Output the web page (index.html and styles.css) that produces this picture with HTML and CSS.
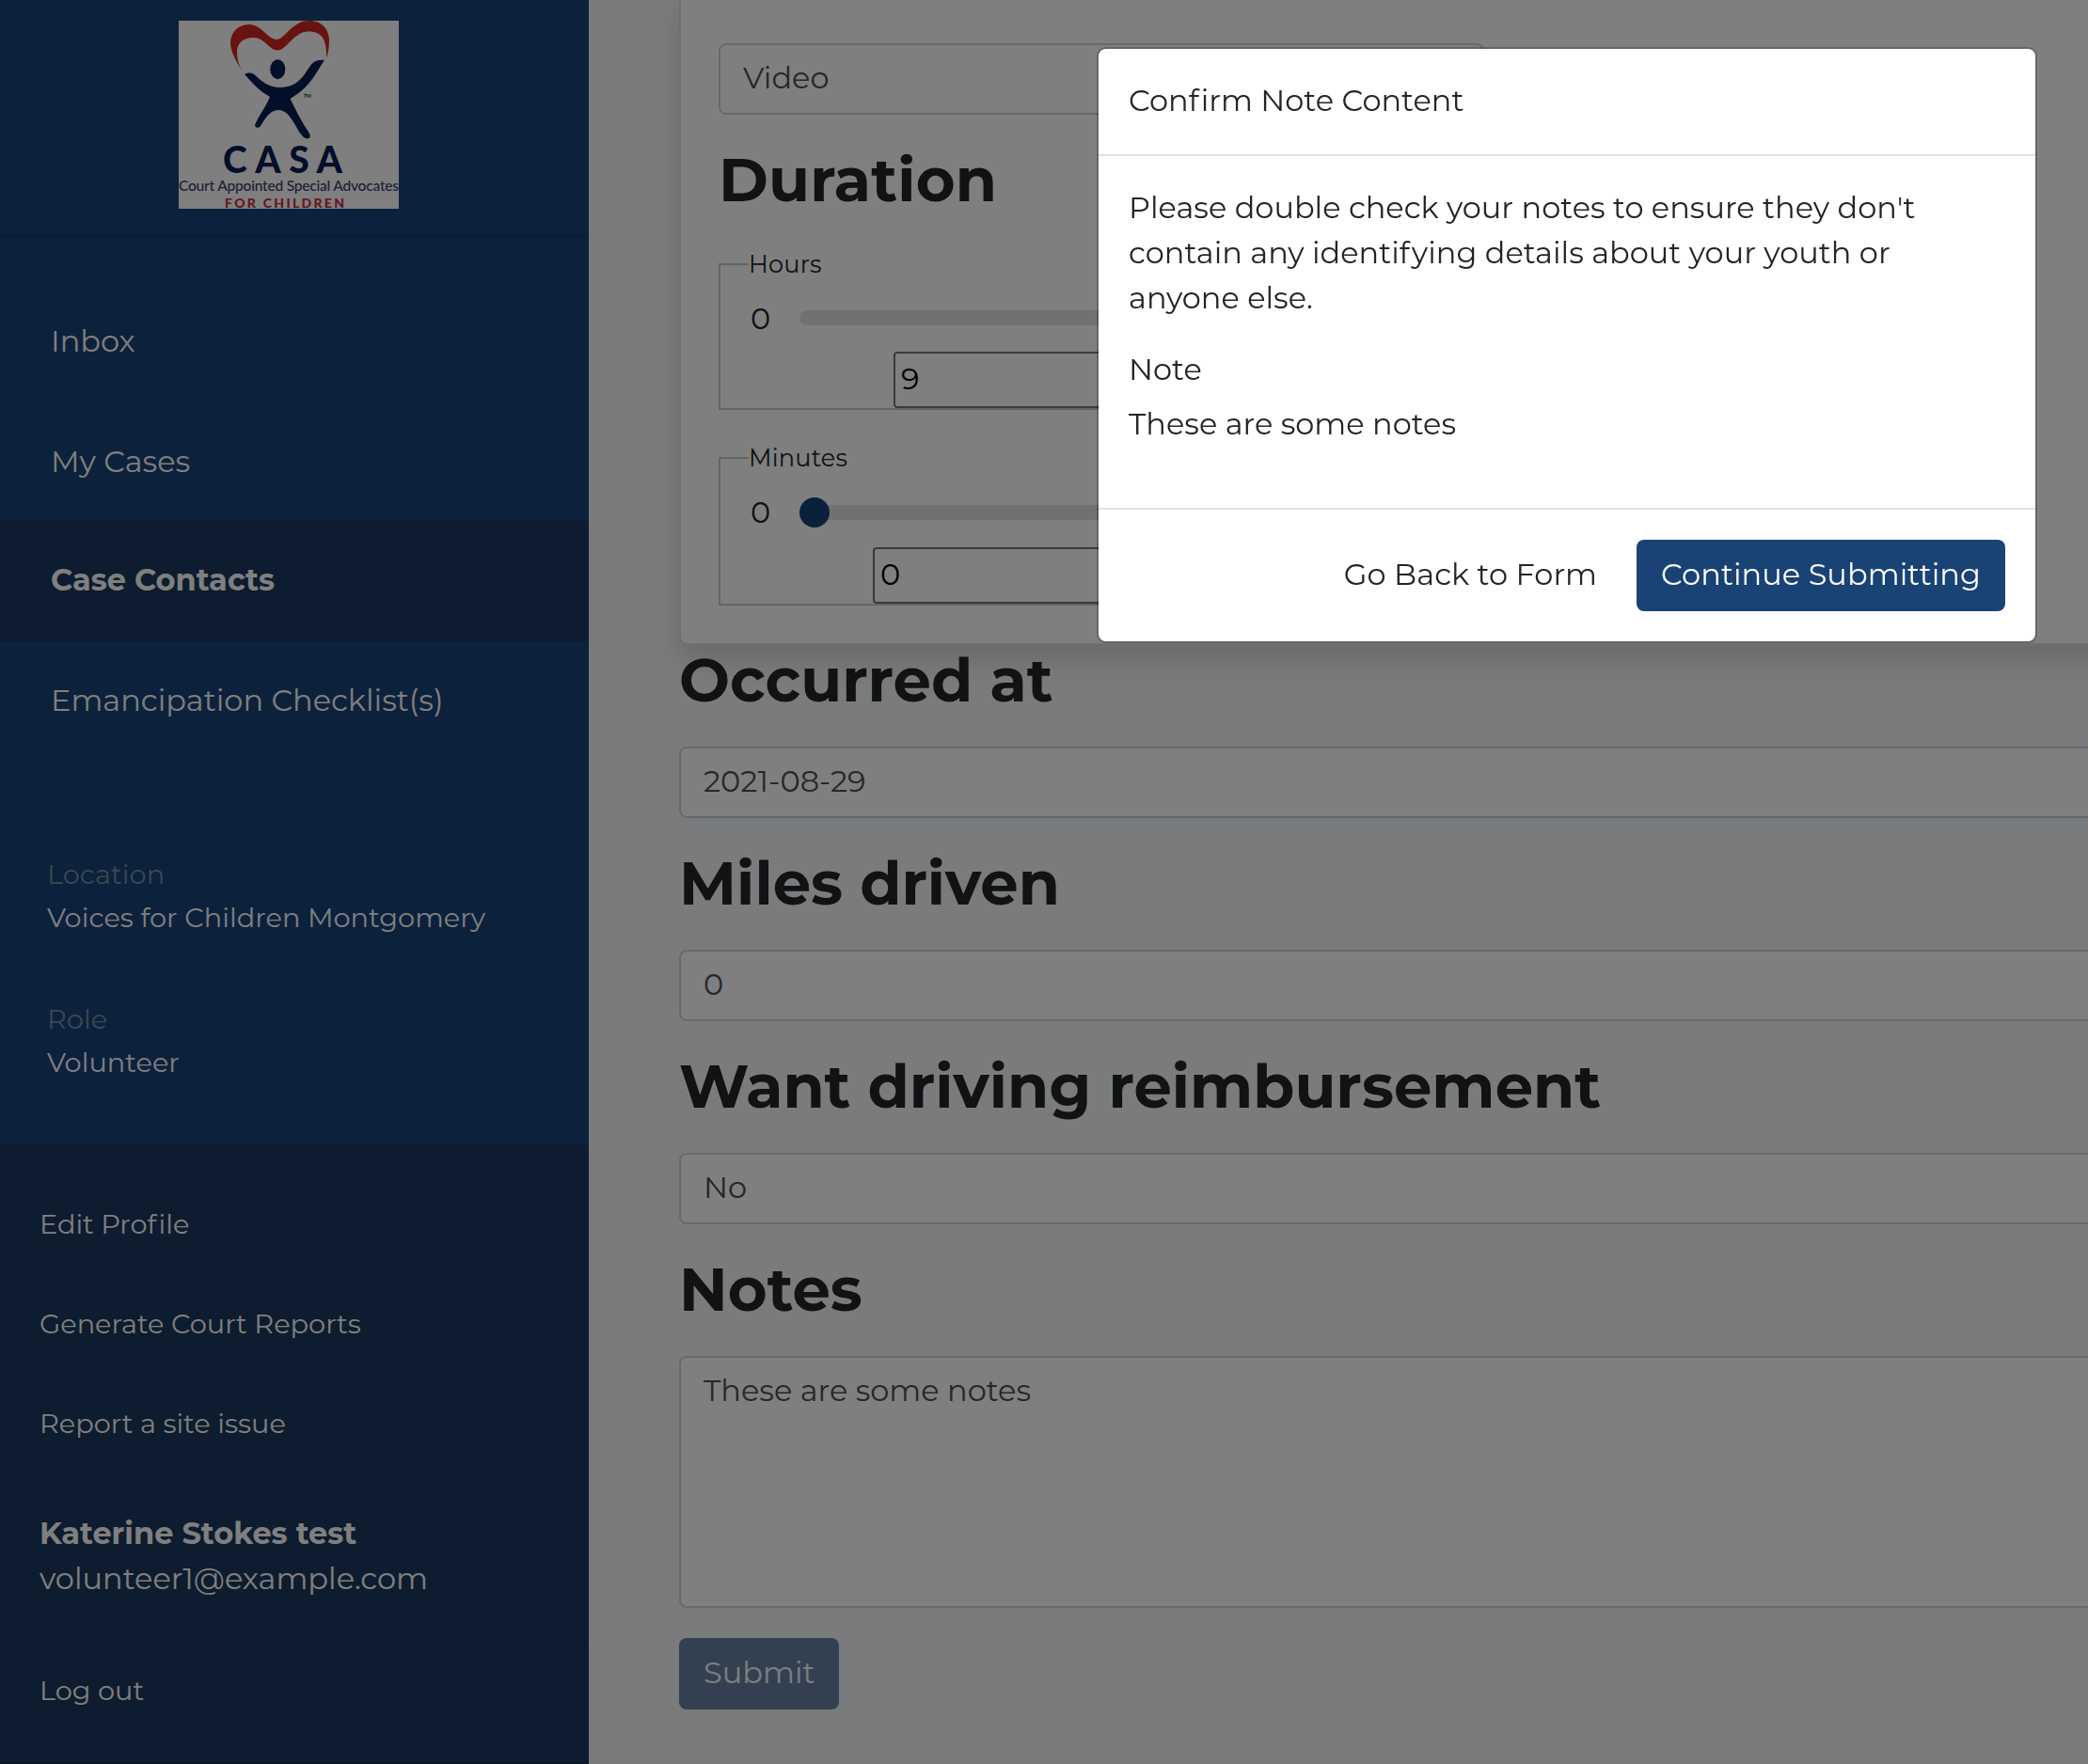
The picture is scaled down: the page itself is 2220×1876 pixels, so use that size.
FILE: index.html
```html
<!DOCTYPE html>
<html lang="en">
<head>
<meta charset="utf-8">
<title>CASA Case Contacts</title>
<link rel="stylesheet" href="styles.css">
</head>
<body>
<div class="page">
  <aside class="sidebar">
    <header class="brand">
      <svg class="logo" viewBox="0 0 234 200" width="234" height="200" role="img" aria-label="CASA">
        <rect width="234" height="200" fill="#fefefe"/>
        <path fill="#d0261e" d="M68 54C60 42 55 32 55 23C56 11 64 4 75 4C88 4 95 20 104 20C113 20 120 0 139 0C152 0 160 9 160 21C160 28 159 34 157 40C157 34 157 28 155 22C152 14 146 11.500 138 11.500C122 11.500 115 31.500 105 31.500C96 31.500 92 18 79 18C69 18 62 24 62 33C62 41 64 48 68 54Z"/>
        <ellipse cx="105.300" cy="51.700" rx="8" ry="10.500" fill="#061c50"/>
        <path fill="#061c50" d="M70 57C73 55 77 55 80 57C88 64 95 71 108 71C128 71 134 56 141 46.500C145 42 150 41.500 155 42C150 49 145 59 138 67C132 74 125 79 118.500 83C125 96 131 108 139 120C141 125 138 126 135 125C126 122 121 95 106 95C97 95 92 104 87 112C85 115 81 114 81 111C85 101 93 91 97 81C86 75 78 66 70 57Z"/>
        <text class="logo-tm" x="133" y="82">TM</text>
        <text class="logo-name" x="47" y="162" textLength="127">CASA</text>
        <text class="logo-line" x="0" y="181" textLength="234">Court Appointed Special Advocates</text>
        <text class="logo-tag" x="49" y="199" textLength="127">FOR CHILDREN</text>
      </svg>
    </header>
    <nav class="nav">
      <a class="nav-item">Inbox</a>
      <a class="nav-item">My Cases</a>
      <a class="nav-item nav-item-active">Case Contacts</a>
      <a class="nav-item">Emancipation Checklist(s)</a>
    </nav>
    <dl class="info">
      <dt>Location</dt><dd>Voices for Children Montgomery</dd>
      <dt>Role</dt><dd>Volunteer</dd>
    </dl>
    <footer class="account">
      <a class="account-link">Edit Pro<span class="loose">f</span>ile</a>
      <a class="account-link">Generate Court Reports</a>
      <a class="account-link">Report a site issue</a>
      <div class="user"><strong>Katerine Stokes test</strong><span>volunteer1@example.com</span></div>
      <a class="logout">Log out</a>
    </footer>
  </aside>
  <main class="content">
    <section class="card">
      <div class="field medium">Video</div>
      <h2 class="heading">Duration</h2>
      <fieldset class="slider slider-hours">
        <legend>Hours</legend>
        <div class="range-row"><span>0</span><div class="track"><i class="thumb thumb-hours"></i></div></div>
        <div class="number number-hours">9</div>
      </fieldset>
      <fieldset class="slider slider-minutes">
        <legend>Minutes</legend>
        <div class="range-row"><span>0</span><div class="track"><i class="thumb"></i></div></div>
        <div class="number number-minutes">0</div>
      </fieldset>
    </section>
    <h2 class="heading">Occurred at</h2>
    <div class="field">2021-08-29</div>
    <h2 class="heading">Miles driven</h2>
    <div class="field">0</div>
    <h2 class="heading">Want driving reimbursement</h2>
    <div class="field">No</div>
    <h2 class="heading">Notes</h2>
    <div class="field notes">These are some notes</div>
    <button class="button submit">Submit</button>
  </main>
</div>
<div class="backdrop">
  <div class="modal" role="dialog">
    <div class="modal-header">Con<span class="loose">f</span>irm Note Content</div>
    <div class="modal-body">
      <p class="modal-text">Please double check your notes to ensure they don't contain any identi<span class="loose">f</span>ying details about your youth or anyone else.</p>
      <p class="modal-label">Note</p>
      <p class="modal-note">These are some notes</p>
    </div>
    <div class="modal-footer">
      <button class="button plain">Go Back to Form</button>
      <button class="button">Continue Submitting</button>
    </div>
  </div>
</div>
</body>
</html>
```
FILE: styles.css
```css
* { box-sizing: border-box; }
html, body { margin: 0; height: 1876px; overflow: hidden; }
body {
  font: 400 32px/48px Montserrat, Inter, sans-serif;
  font-variant-ligatures: none;
  color: #212529;
  background: #f5f7fa;
}
p, dl, dd { margin: 0; }
.loose { letter-spacing: 2.200px; }

.page { display: flex; height: 1876px; overflow: hidden; }

/* Sidebar */
.sidebar {
  flex: none;
  display: flex;
  flex-direction: column;
  width: 626px;
  color: #fff;
  background: #184276;
}
.brand {
  flex: none;
  height: 252px;
  padding: 22px 0 0 190px;
  border-bottom: 2px solid #193a62;
}
.logo { display: block; overflow: visible; }
.logo-tm { font: 700 5px Lato, sans-serif; fill: #061c50; }
.logo-name { font: 900 39px Lato, sans-serif; fill: #061c50; }
.logo-line { font: 500 15.500px Lato, sans-serif; fill: #35416a; }
.logo-tag { font: 900 14px Lato, sans-serif; fill: #c82c36; }

.nav { flex: none; display: flex; flex-direction: column; height: 520px; padding-top: 46px; margin-bottom: 38px; }
.nav-item {
  flex: none;
  display: flex;
  align-items: center;
  height: 128px;
  padding: 1px 54px 0;
}
.nav-item:nth-child(4) { padding: 0 54px 2px; }
.nav-item-active { font-weight: 700; background: #1a385c; padding: 0 54px 2px; }

.info {
  flex: none;
  height: 408px;
  padding: 97px 50px 0;
  font-size: 28.800px;
  line-height: 46px;
  letter-spacing: .03px;
}
.info dt { color: #7b8da6; }
.info dd { margin-bottom: 62px; }

.account {
  flex: 1;
  display: flex;
  flex-direction: column;
  padding-top: 31px;
  background: #1a385c;
}
.account-link {
  flex: none;
  height: 106px;
  padding: 30px 42px;
  font-size: 28.800px;
  line-height: 46px;
}
.user { flex: none; display: flex; flex-direction: column; height: 177px; padding: 40px 42px 0; }
.logout {
  flex: 1;
  padding: 29px 42px;
  font-size: 28.800px;
  line-height: 46px;
  border-top: 2px solid #183454;
  border-bottom: 1px solid #122a48;
}

/* Form */
.content { flex: 1; padding-left: 96px; }
.card {
  width: 1600px;
  height: 686px;
  padding: 46px 40px 0;
  background: #fff;
  border: 2px solid rgba(0, 0, 0, .125);
  border-top: 0;
  border-radius: 0 0 8px 8px;
  box-shadow: 0 16px 32px rgba(0, 0, 0, .15);
}
.heading { margin: 0; padding: 31px 0 33px; height: 140px; font-size: 64px; font-weight: 700; line-height: 76px; }
.card > .heading { letter-spacing: .2px; }
.card + .heading { height: 108px; padding-top: 0; line-height: 75px; }
.field {
  width: 1600px;
  height: 76px;
  padding: 11px 24px;
  color: #495057;
  background: #fff;
  border: 2px solid #ced4da;
  border-radius: 8px;
}
.field.medium { width: 814px; }
.field.notes { height: 268px; }
.slider {
  width: 814px;
  height: 174px;
  margin: 0;
  padding: 0 30px;
  border: 2px solid #c8c8c8;
}
.slider-minutes { margin-top: 32px; height: 176px; }
.slider legend { width: 100%; padding: 0; font-size: 25.600px; line-height: 38px; letter-spacing: .2px; }
.range-row { display: flex; align-items: center; gap: 31px; height: 48px; margin-top: 15px; padding-left: 2px; }
.track { display: flex; align-items: center; flex: 1; height: 16px; border-radius: 8px; background: #dee2e6; }
.slider-hours .track { margin-bottom: 2px; }
.thumb { width: 32px; height: 32px; border-radius: 50%; background: #174277; }
.thumb-hours { margin-left: 560px; }
.number {
  height: 60px;
  padding: 3px 6px;
  color: #000;
  background: #fff;
  border: 2px solid #767676;
  border-radius: 4px;
}
.number-hours { width: 440px; margin: 11px 0 0 154px; }
.number-minutes { width: 484px; margin: 13px 0 0 132px; }

.button {
  height: 76px;
  padding: 0 26px 2px;
  font: inherit;
  font-variant-ligatures: none;
  letter-spacing: .05px;
  color: #fff;
  background: #1a4375;
  border: 0;
  border-radius: 8px;
}
.submit { display: block; margin-top: 32px; opacity: .65; }
.plain { color: #212529; background: none; }

/* Dialog */
.backdrop { position: fixed; inset: 0; background: rgba(0, 0, 0, .5); }
.modal {
  position: absolute;
  left: 1166px;
  top: 50px;
  width: 1000px;
  height: 634px;
  background: #fff;
  background-clip: padding-box;
  border: 2px solid rgba(0, 0, 0, .2);
  border-radius: 9.600px;
}
.modal-header { height: 114px; padding: 31px 32px; border-bottom: 2px solid #dee2e6; }
.modal-body { height: 374px; padding: 31px 32px; }
.modal-text { margin-bottom: 28px; }
.modal-label { margin-bottom: 10px; }
.modal-footer {
  display: flex;
  align-items: center;
  justify-content: flex-end;
  gap: 16px;
  height: 142px;
  padding: 0 32px;
  border-top: 2px solid #dee2e6;
}
```
